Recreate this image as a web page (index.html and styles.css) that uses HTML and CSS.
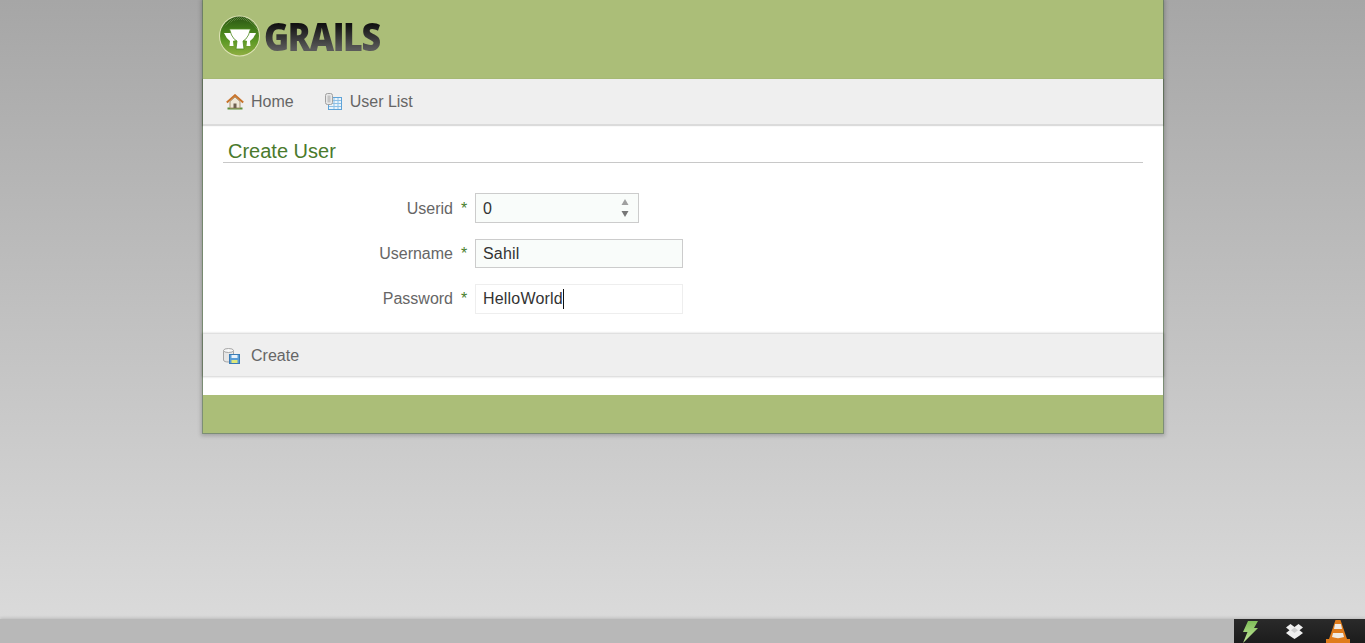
FILE: index.html
```html
<!DOCTYPE html>
<html lang="en">
<head>
<meta charset="utf-8">
<title>Create User</title>
<link rel="stylesheet" href="styles.css">
</head>
<body>
<div class="stage">
  <div class="page">
    <header class="masthead">
      <div class="logo">
        <svg class="logo-mark" width="42" height="42" viewBox="0 0 42 42">
          <defs>
            <linearGradient id="orb" x1="0" y1="0" x2="0" y2="1">
              <stop offset="0" stop-color="#2b5514"/>
              <stop offset=".35" stop-color="#437d1b"/>
              <stop offset=".65" stop-color="#5f9a26"/>
              <stop offset="1" stop-color="#8fae42"/>
            </linearGradient>
            <pattern id="dots" width="2" height="2" patternUnits="userSpaceOnUse">
              <rect width="1" height="1" fill="#c6d79a"/>
              <rect x="1" y="1" width="1" height="1" fill="#c6d79a"/>
            </pattern>
          </defs>
          <circle cx="20.500" cy="21" r="20.500" fill="#dfe3b8"/>
          <circle cx="20.500" cy="21" r="19.500" fill="url(#orb)"/>
          <path d="M20.500 1.500A19.500 19.500 0 0 1 40 21 19.500 19.500 0 0 0 33 9 19.500 19.500 0 0 0 5 13 19.500 19.500 0 0 1 20.500 1.500Z" fill="url(#dots)" opacity=".3"/>
          <path d="M5 18H14Q15 23 17 25L14 26 14.500 31H10.500L11 26Q7 23 5 18Z" fill="#fff"/>
          <path d="M37 18H28Q27 23 25 25L28 26 27.500 31H31.500L31 26Q35 23 37 18Z" fill="#fff"/>
          <path d="M10.500 14H31.500L29.500 20Q27 25 24 26L25 34H17L18 26Q15 25 12.500 20Z" fill="#fff" stroke="#4f8a20" stroke-width=".8"/>
        </svg>
        <span class="logo-word">GRAILS</span>
      </div>
    </header>
    <nav class="bar nav-bar">
      <a class="bar-link link-home" href="#">
        <svg class="icon" width="18" height="16" viewBox="0 0 18 16">
          <rect x="1.500" y="13.500" width="15" height="2" fill="#5f8f3a"/>
          <path d="M4 7.500V14H14V7.500L9 3Z" fill="#efe8d8" stroke="#a8936f"/>
          <path d="M.8 8.500 9 1.200 17.200 8.500" fill="none" stroke="#c8732a" stroke-width="2"/>
          <rect x="7.500" y="9.500" width="3" height="4.500" fill="#6f6151"/>
        </svg>
        <span>Home</span>
      </a>
      <a class="bar-link link-list" href="#">
        <svg class="icon" width="17" height="17" viewBox="0 0 17 17">
          <rect x="3.500" y="4.500" width="13" height="12" fill="#eaf4fb" stroke="#5ea3d8"/>
          <path d="M4 7.500H16M4 10.500H16M4 13.500H16M9 5V16M13 5V16" stroke="#8dc0e6"/>
          <rect x=".5" y=".5" width="7" height="11" rx="2" fill="#e8e8e8" stroke="#a0a0a0"/>
          <rect x="2.500" y="2.500" width="3" height="7" fill="#c4c4c4"/>
        </svg>
        <span>User List</span>
      </a>
    </nav>
    <main class="content">
      <h1 class="title">Create User</h1>
      <form class="form">
        <div class="row row-first">
          <label class="label" for="userid">Userid</label>
          <span class="star">*</span>
          <div class="field field-num">
            <span id="userid">0</span>
            <svg class="spinner" width="8" height="20" viewBox="0 0 8 20">
              <path d="M4 1 7.500 7H.5Z" fill="#a0a0a0"/>
              <path d="M4 19 7.500 13H.5Z" fill="#777"/>
            </svg>
          </div>
        </div>
        <div class="row">
          <label class="label" for="username">Username</label>
          <span class="star">*</span>
          <div class="field field-text"><span id="username">Sahil</span></div>
        </div>
        <div class="row">
          <label class="label" for="password">Password</label>
          <span class="star">*</span>
          <div class="field field-focus"><span id="password" class="caret">HelloWorld</span></div>
        </div>
      </form>
    </main>
    <div class="bar action-bar">
      <a class="bar-link" href="#">
        <svg class="icon" width="17" height="16" viewBox="0 0 17 16">
          <path d="M.5 2.500V12C.5 13.500 3 14 5.500 14S10.500 13.500 10.500 12V2.500Z" fill="#e6e6e6" stroke="#a5a5a5"/>
          <ellipse cx="5.500" cy="2.500" rx="5" ry="2" fill="#f7f7f7" stroke="#a5a5a5"/>
          <rect x="6.500" y="6.500" width="10" height="9" fill="#5a9dd6" stroke="#3b7cb5"/>
          <rect x="8.500" y="7" width="6" height="3" fill="#e8f2fa"/>
          <rect x="8.500" y="12" width="6" height="3" fill="#dfe87a"/>
        </svg>
        <span>Create</span>
      </a>
    </div>
    <div class="spacer"></div>
    <footer class="page-foot"></footer>
  </div>
</div>
<div class="panel">
  <div class="tray">
    <svg class="tray-icon" width="18" height="23" viewBox="0 0 18 23">
      <defs>
        <linearGradient id="bolt" x1="0" y1="0" x2="0" y2="1">
          <stop offset="0" stop-color="#7fbe58"/>
          <stop offset="1" stop-color="#c4e89c"/>
        </linearGradient>
      </defs>
      <path d="M7 1H17L13 8H17L2 23 6.500 12H2Z" fill="url(#bolt)"/>
    </svg>
    <svg class="tray-icon tray-drop" width="17" height="15" viewBox="0 0 17 15">
      <path d="M4.500 0 8.500 3 12.500 0 17 3.500 13.500 6.300 17 9 13 12 8.500 15 4 12 0 9 3.500 6.300 0 3.500Z" fill="#efefef"/>
      <path d="M8.500 3.500 12 6.300 8.500 9 5 6.300Z" fill="#cfcfcf"/>
    </svg>
    <svg class="tray-icon" width="24" height="24" viewBox="0 0 24 24">
      <path d="M9.500 1H14.500L21 20H24V24H0V20H3Z" fill="#e07c1c"/>
      <path d="M9 5H15L16 10H8Z" fill="#f0ebe4"/>
      <path d="M7 14H17L18 18C14 19.500 10 19.500 6 18Z" fill="#f0ebe4"/>
    </svg>
  </div>
</div>
</body>
</html>
```
FILE: styles.css
```css
html, body {
  margin: 0;
  height: 100%;
}

body {
  display: flex;
  flex-direction: column;
  height: 643px;
  overflow: hidden;
  background: linear-gradient(#a6a6a6, #dcdcdc);
  font-family: "Liberation Sans", Arial, sans-serif;
  font-size: 16px;
  color: #666;
}

.stage {
  flex: 1;
  display: flex;
  justify-content: center;
  align-items: flex-start;
}

.page {
  width: 960px;
  height: 433px;
  margin-left: 1px;
  display: flex;
  flex-direction: column;
  background: #fff;
  box-shadow: 0 0 0 1px rgba(80, 115, 65, .5), 0 1px 4px 2px rgba(0, 0, 0, .2);
}

.masthead {
  height: 79px;
  background: #abbe78;
  box-sizing: border-box;
  padding: 15px 0 0 16px;
}

.logo {
  display: flex;
  align-items: center;
  height: 42px;
}

.logo-mark {
  flex: none;
}

.logo-word {
  margin-left: 3px;
  font-family: "Open Sans", sans-serif;
  font-weight: 800;
  font-size: 34px;
  line-height: 42px;
  letter-spacing: -1.400px;
  background: linear-gradient(#111 25%, #5a5a5a 78%);
  -webkit-background-clip: text;
  background-clip: text;
  color: transparent;
  transform: scaleY(1.12);
}

.bar {
  display: flex;
  align-items: center;
  box-sizing: border-box;
  background: #efefef;
}

.nav-bar {
  height: 45px;
  padding: 0 0 0 23px;
  box-shadow: 0 1px 1px 1px rgba(0, 0, 0, .14);
}

.action-bar {
  height: 42px;
  margin-top: 1px;
  padding: 2px 0 0 20px;
  box-shadow: 0 0 2px 1px rgba(0, 0, 0, .18);
}

.bar-link {
  display: flex;
  align-items: center;
  color: #666;
  text-decoration: none;
}

.bar-link .icon {
  margin-right: 11px;
}

.nav-bar .bar-link .icon {
  margin-right: 7px;
}

.nav-bar .link-list .icon {
  margin-right: 8px;
}

.link-list {
  margin-left: 31px;
}

.content {
  height: 209px;
  box-sizing: border-box;
  padding: 16px 20px 0;
}

.title {
  margin: 0;
  padding: 0 0 0 5px;
  height: 22px;
  font-size: 20px;
  line-height: 23px;
  font-weight: 400;
  color: #4a7a2c;
  border-bottom: 1px solid #c8c8c8;
}

.form {
  margin-top: 30px;
  display: flex;
  flex-direction: column;
  gap: 16px;
}

.row {
  display: flex;
  align-items: center;
}

.row-first .label,
.row-first .star {
  padding-top: 2px;
}

.label {
  width: 230px;
  text-align: right;
}

.star {
  width: 22px;
  box-sizing: border-box;
  padding-left: 8px;
  color: #48802c;
  font-size: 16px;
}

.field {
  box-sizing: border-box;
  height: 30px;
  width: 208px;
  padding-left: 7px;
  display: flex;
  align-items: center;
  color: #333;
  letter-spacing: .2px;
  background: #fff;
  border: 1px solid #ccc;
}

.field-num {
  width: 164px;
  justify-content: space-between;
  padding: 2px 9px 0 7px;
  background: #f9fcfa;
}

.field-num .spinner {
  margin-top: -2px;
}

.field-text {
  height: 29px;
  background: #f9fcfa;
}

.field-focus {
  border-color: #eee;
}

.caret {
  border-right: 1px solid #111;
  height: 20px;
  line-height: 20px;
}

.spacer {
  height: 19px;
}

.page-foot {
  height: 38px;
  background: #abbe78;
}

.panel {
  height: 24px;
  display: flex;
  justify-content: flex-end;
  background: #b8b8b8;
  box-shadow: 0 -1px 3px rgba(0, 0, 0, .15);
}

.tray {
  width: 131px;
  display: flex;
  align-items: center;
  justify-content: space-between;
  box-sizing: border-box;
  padding: 0 15px 0 7px;
  background: linear-gradient(#2a2a2a, #1c1c1c);
}

.tray-icon {
  flex: none;
}

.tray-drop {
  margin-left: 3px;
}
```
